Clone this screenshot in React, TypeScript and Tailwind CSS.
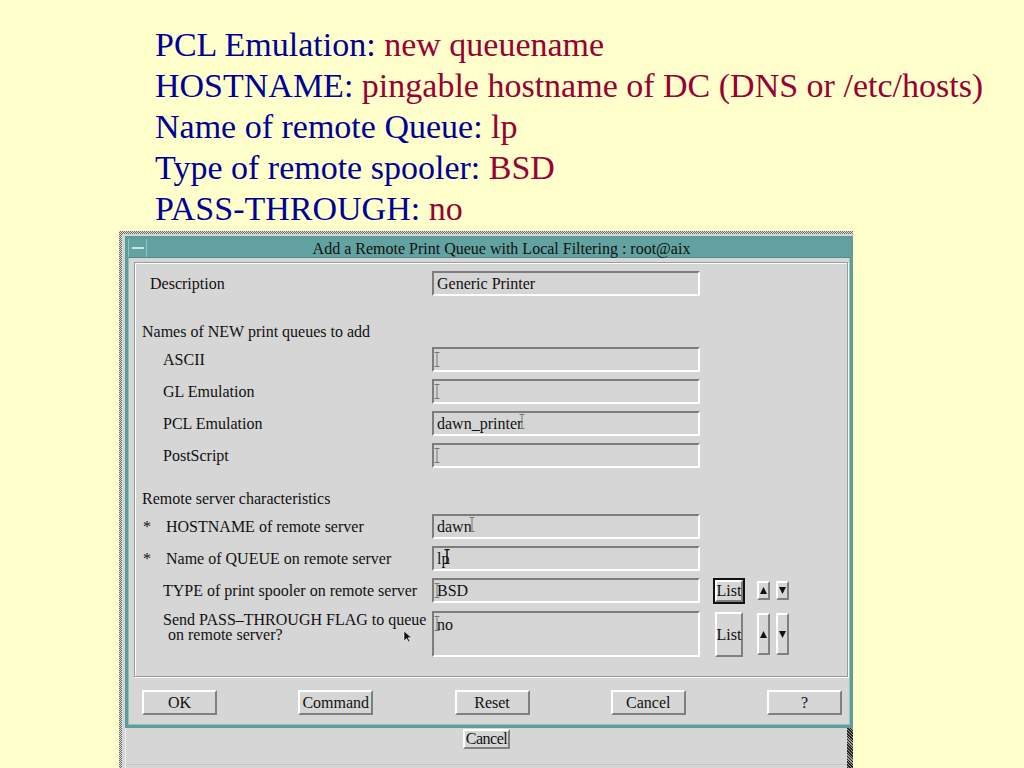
import React from "react";

const serif = { fontFamily: '"Liberation Serif", "Times New Roman", serif' };

const raised =
  "border-2 border-t-white border-l-white border-b-[#7f7f7f] border-r-[#7f7f7f] bg-[#d6d6d6]";

function Caret({ dark = false }: { dark?: boolean }) {
  return (
    <svg width="6" height="15" viewBox="0 0 6 15" className="shrink-0">
      <path
        d="M0.5 0.5h5M3 0.5v14M0.5 14.5h5"
        stroke={dark ? "#111" : "#777"}
        strokeWidth={dark ? 1.4 : 1}
        fill="none"
      />
    </svg>
  );
}

function Field({ children, tall = false }: { children?: React.ReactNode; tall?: boolean }) {
  return (
    <div
      className={
        tall
          ? "flex w-[268px] h-[46px] items-start pt-[3px] border-2 border-t-[#7d7d7d] border-l-[#7d7d7d] border-b-white border-r-white bg-[#d5d5d5] text-[16px] leading-[18px] text-[#111]"
          : "flex w-[268px] h-[25px] items-center border-2 border-t-[#7d7d7d] border-l-[#7d7d7d] border-b-white border-r-white bg-[#d5d5d5] text-[16px] text-[#111]"
      }
    >
      {children}
    </div>
  );
}

function Arrow({ up }: { up: boolean }) {
  return (
    <svg width="7" height="7" viewBox="0 0 7 7">
      <polygon points={up ? "0,7 3.5,0 7,7" : "0,0 7,0 3.5,7"} fill="#111" />
    </svg>
  );
}

function Row({ label, star = false, children }: { label: string; star?: boolean; children: React.ReactNode }) {
  return (
    <div className="flex items-center h-[25px] mt-[7px]">
      <div className="w-[290px] flex text-[16px] text-[#111]">
        {star ? (
          <>
            <span className="w-[24px] pl-[1px]">*</span>
            <span>{label}</span>
          </>
        ) : (
          <span className="pl-[21px]">{label}</span>
        )}
      </div>
      {children}
    </div>
  );
}

function Header({ text, mt }: { text: string; mt: string }) {
  return <div className={`${mt} h-[16px] leading-[16px] text-[16px] text-[#111]`}>{text}</div>;
}

export default function App() {
  return (
    <div className="w-[1024px] h-[768px] overflow-hidden bg-[#ffffcc]" style={serif}>
      <div className="pl-[155px] pt-[24px] text-[34px] leading-[41px] text-[#000099]">
        <div>
          PCL Emulation: <span className="text-[#990033]">new queuename</span>
        </div>
        <div>
          HOSTNAME: <span className="text-[#990033]">pingable hostname of DC (DNS or /etc/hosts)</span>
        </div>
        <div>
          Name of remote Queue: <span className="text-[#990033]">lp</span>
        </div>
        <div>
          Type of remote spooler: <span className="text-[#990033]">BSD</span>
        </div>
        <div>
          PASS-THROUGH: <span className="text-[#990033]">no</span>
        </div>
      </div>

      {/* parent window behind the dialog */}
      <div className="ml-[119px] mt-[2px] w-[734px] pl-[3px] pt-[3px] bg-[repeating-conic-gradient(#6a6a6a_0%_25%,#dcdcd0_0%_50%)] bg-[length:2px_2px]">
        <div className="bg-[#d6d6d6] pl-[3px] pt-[2px]">
          {/* dialog */}
          <div className="w-[728px] border-[3px] border-[#5f9d9b] bg-[#d6d6d6] shadow-[inset_0_0_0_1px_#8fc4c0]">
            <div className="flex h-[19px] bg-[#62a3a1] border-b border-[#4f8b89]">
              <div className="w-[19px] h-full flex items-center justify-center border-r border-[#8cc6c2] border-l border-l-[#8cc6c2]">
                <div className="w-[12px] h-[2px] bg-[#c9e4e2]" />
              </div>
              <div className="flex-1 text-center text-[16px] leading-[19px] pl-[6px] text-[#111]">
                Add a Remote Print Queue with Local Filtering : root@aix
              </div>
            </div>

            <div className="ml-[6px] mr-[2px] mt-[4px] h-[415px] border border-[#9a9a9a] shadow-[inset_1px_1px_0_#fff,1px_1px_0_#fff] pl-[7px] pt-[8px]">
              <div className="flex items-center h-[25px]">
                <div className="w-[290px] pl-[8px] text-[16px] text-[#111]">Description</div>
                <Field>
                  <span className="pl-[3px]">Generic Printer</span>
                </Field>
              </div>

              <Header text="Names of NEW print queues to add" mt="mt-[28px]" />
              <Row label="ASCII">
                <Field>
                  <Caret />
                </Field>
              </Row>
              <Row label="GL Emulation">
                <Field>
                  <Caret />
                </Field>
              </Row>
              <Row label="PCL Emulation">
                <Field>
                  <span className="pl-[3px]">dawn_printe</span>
                  <span className="relative">
                    r
                    <span className="absolute left-[2px] top-[2px]">
                      <Caret />
                    </span>
                  </span>
                </Field>
              </Row>
              <Row label="PostScript">
                <Field>
                  <Caret />
                </Field>
              </Row>

              <Header text="Remote server characteristics" mt="mt-[23px]" />
              <Row label="HOSTNAME of remote server" star>
                <Field>
                  <span className="pl-[3px]">daw</span>
                  <span className="relative">
                    n
                    <span className="absolute left-[5px] top-[2px]">
                      <Caret />
                    </span>
                  </span>
                </Field>
              </Row>
              <Row label="Name of QUEUE on remote server" star>
                <Field>
                  <span className="pl-[3px]">l</span>
                  <span className="relative">
                    p
                    <span className="absolute left-[3px] top-[2px]">
                      <Caret dark />
                    </span>
                  </span>
                </Field>
              </Row>
              <Row label="TYPE of print spooler on remote server">
                <Field>
                  <Caret />
                  <span className="-ml-[3px]">BSD</span>
                </Field>
                <div className="ml-[13px] w-[32px] h-[26px] border-2 border-[#111]">
                  <div className={`${raised} w-full h-full flex items-center justify-center text-[16px] text-[#111]`}>
                    List
                  </div>
                </div>
                <div className={`${raised} ml-[12px] w-[13px] h-[19px] flex items-center justify-center`}>
                  <Arrow up />
                </div>
                <div className={`${raised} ml-[6px] w-[13px] h-[19px] flex items-center justify-center`}>
                  <Arrow up={false} />
                </div>
              </Row>

              <div className="relative flex items-start h-[46px] mt-[8px]">
                <div className="w-[290px] text-[16px] leading-[15px] text-[#111] pt-[1px]">
                  <div className="pl-[21px]">Send PASS–THROUGH FLAG to queue</div>
                  <div className="pl-[26px]">on remote server?</div>
                </div>
                <Field tall>
                  <Caret />
                  <span className="-ml-[3px]">no</span>
                </Field>
                <div className="ml-[13px] w-[32px] h-[46px] p-[2px] pt-[1px]">
                  <div className={`${raised} w-full h-[45px] flex items-center justify-center text-[16px] text-[#111]`}>
                    List
                  </div>
                </div>
                <div className={`${raised} ml-[12px] mt-[2px] w-[13px] h-[42px] flex items-center justify-center`}>
                  <Arrow up />
                </div>
                <div className={`${raised} ml-[6px] mt-[2px] w-[13px] h-[42px] flex items-center justify-center`}>
                  <Arrow up={false} />
                </div>
                {/* mouse pointer */}
                <svg className="absolute left-[261px] top-[19px]" width="9" height="13" viewBox="0 0 9 13">
                  <path d="M1 1v10l2.5-2.5 2 3.5 1.5-0.8-2-3.4h3.5z" fill="#111" stroke="#fff" strokeWidth="0.6" />
                </svg>
              </div>
            </div>

            <div className="flex justify-between pl-[14px] pr-[8px] pt-[13px] pb-[10px]">
              {["OK", "Command", "Reset", "Cancel", "?"].map((b) => (
                <div
                  key={b}
                  className={`${raised} w-[75px] h-[25px] flex items-center justify-center text-[16px] text-[#111]`}
                >
                  {b}
                </div>
              ))}
            </div>
          </div>

          {/* parent window lower area */}
          <div className="flex h-[40px] border-l border-[#eeeeee]">
            <div className="flex-1 flex justify-center border-b border-[#c4c4c4] mb-[3px]">
              <div className={`${raised} w-[47px] h-[20px] mt-[1px] flex items-center justify-center text-[16px] leading-[16px] text-[#111] tracking-[-0.5px]`}>
                Cancel
              </div>
            </div>
            <div className="w-[6px] h-full bg-[repeating-linear-gradient(45deg,#222_0px,#222_1px,#9a9a9a_1px,#9a9a9a_2px)]" />
          </div>
        </div>
      </div>
    </div>
  );
}
